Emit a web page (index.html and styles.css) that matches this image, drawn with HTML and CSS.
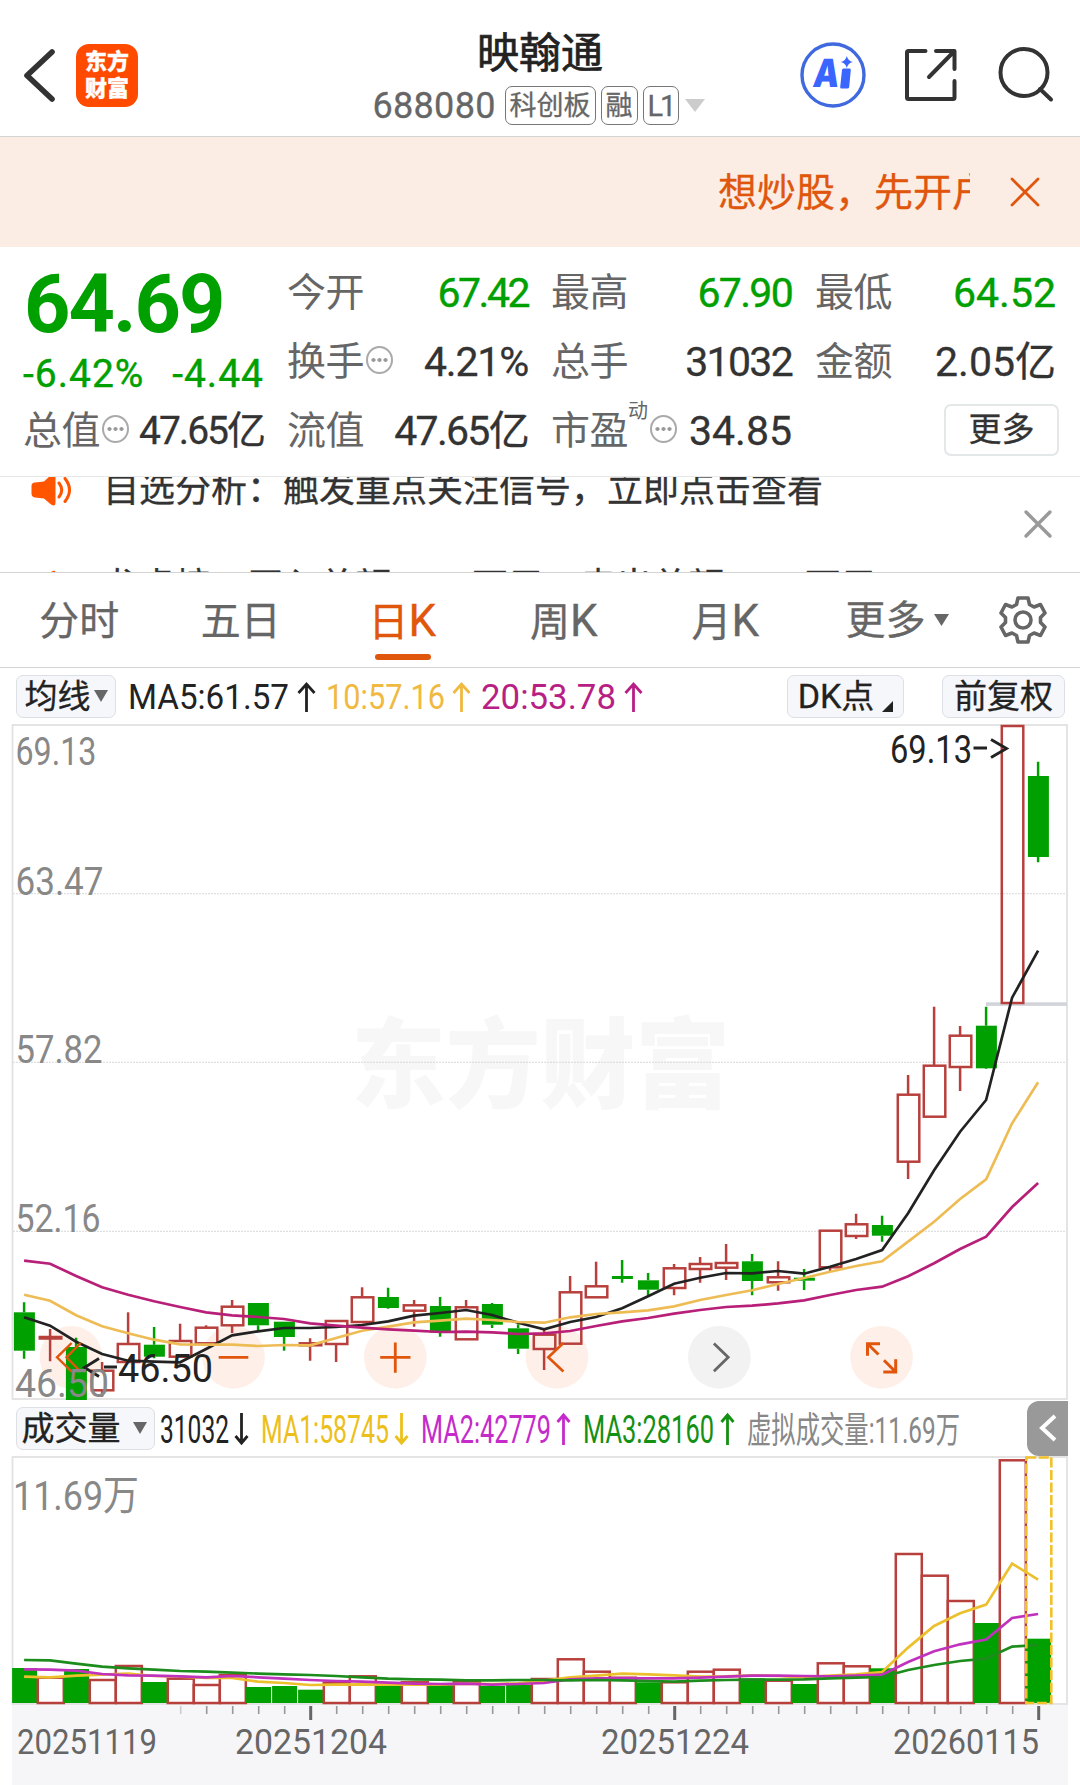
FILE: index.html
```html
<!DOCTYPE html>
<html lang="zh-CN">
<head>
    <meta charset="UTF-8">
    <title>映翰通 688080</title>
    <link rel="stylesheet" href="styles.css">
</head>
<body>
<header class="header">
    <div class="header-left">
        <svg class="back" width="32" height="54" viewBox="0 0 32 54"><path d="M29 4 L4 27.5 L29 51"/></svg>
        <div class="logo"><span>东方</span><span>财富</span></div>
    </div>
    <div class="header-title">
        <div class="stock-name">映翰通</div>
        <div class="stock-sub">
            <span class="stock-code">688080</span>
            <span class="tag">科创板</span>
            <span class="tag">融</span>
            <span class="tag tag-level">L1</span>
            <svg class="caret" width="20" height="13"><path d="M0 0H20L10 13Z" fill="#ccc"/></svg>
        </div>
    </div>
    <div class="header-right">
        <svg width="70" height="70" viewBox="0 0 70 70">
            <circle cx="35" cy="35" r="31" fill="none" stroke="#4069e0" stroke-width="3.4"/>
            <text class="ai" transform="translate(14 47) skewX(-7)" textLength="26" lengthAdjust="spacingAndGlyphs">A</text>
            <path d="M44 30q0-1.500 1.500-1.500h6q1.500 0 1.300 1.500l-1.600 17q-.2 1.500-1.700 1.500h-6q-1.500 0-1.300-1.500zM48.800 16q1.200 5 6 6q-4.800 1.200-6 6q-1.200-4.800-6-6q4.800-1 6-6z" fill="#3a66ff"/>
        </svg>
        <svg class="line-icon share" width="56" height="56" viewBox="0 0 56 56">
            <path d="M22.500 4H5.500Q4 4 4 5.500V50.500Q4 52 5.500 52H50Q51.500 52 51.500 50.500V34M33 4H51.500V22M51 4.500L26 30"/>
        </svg>
        <svg class="line-icon search" width="58" height="58" viewBox="0 0 58 58">
            <circle cx="27" cy="26.500" r="23.500"/><path d="M43 43L54 53.500"/>
        </svg>
    </div>
</header>

<div class="banner">
    <div class="marquee">想炒股，先开户</div>
    <svg class="banner-close" width="32" height="32" viewBox="0 0 32 32"><path d="M3 3L29 29M29 3L3 29"/></svg>
</div>

<section class="quote">
    <div class="price-box">
        <div class="price">64.69</div>
        <div class="change"><span>-6.42%</span><span>-4.44</span></div>
    </div>
    <div class="cell"><label>今开</label><b class="down tight">67.42</b></div>
    <div class="cell"><label>最高</label><b class="down mid">67.90</b></div>
    <div class="cell"><label>最低</label><b class="down">64.52</b></div>
    <div class="cell"><label>换手</label><i class="info"></i><b class="semi">4.21%</b></div>
    <div class="cell"><label>总手</label><b class="mid">31032</b></div>
    <div class="cell"><label>金额</label><b>2.05亿</b></div>
    <div class="cell"><label>总值</label><i class="info"></i><b class="small">47.65亿</b></div>
    <div class="cell"><label>流值</label><b class="mid">47.65亿</b></div>
    <div class="cell"><label>市盈<sup>动</sup></label><i class="info"></i><b>34.85</b></div>
    <div class="cell"><button class="more">更多</button></div>
</section>

<section class="news">
    <div class="news-list">
        <div class="news-item">
            <svg width="42" height="36" viewBox="0 0 42 36"><path d="M4 10.500Q.5 10.500.5 14V21.500Q.5 25 4 25.500L13 26.500L20 32.500Q24.500 35 24.500 31V4Q24.500 0 20 3L13 9.500Z" fill="#ff5500"/><path d="M28 11Q33.500 18 28 25M34 6.500Q43 18 34 29.500" fill="none" stroke="#ff5500" stroke-width="3" stroke-linecap="round"/></svg>
            <span>自选分析：触发重点关注信号，立即点击查看</span>
        </div>
        <div class="news-item">
            <svg width="42" height="36" viewBox="0 0 42 36"><path d="M4 10.500Q.5 10.500.5 14V21.500Q.5 25 4 25.500L13 26.500L20 32.500Q24.500 35 24.500 31V4Q24.500 0 20 3L13 9.500Z" fill="#ff5500"/><path d="M28 11Q33.500 18 28 25M34 6.500Q43 18 34 29.500" fill="none" stroke="#ff5500" stroke-width="3" stroke-linecap="round"/></svg>
            <span>龙虎榜：买入总额3444万元，卖出总额7778万元</span>
        </div>
    </div>
    <svg class="news-close" width="30" height="30" viewBox="0 0 30 30"><path d="M3 3L27 27M27 3L3 27"/></svg>
</section>

<nav class="tabs">
    <a class="tab">分时</a>
    <a class="tab">五日</a>
    <a class="tab active">日<em>K</em></a>
    <a class="tab">周<em>K</em></a>
    <a class="tab">月<em>K</em></a>
    <a class="tab tab-more">更多<svg width="15" height="12"><path d="M0 0H15L7.500 12Z" fill="#666"/></svg></a>
    <svg class="gear" width="50" height="50" viewBox="-25 -25 50 50">
        <circle r="8"/>
        <path d="M-5-22H5L6.500-15.500L11-13L17.500-15.500L22-7L17.500-2.500V2.500L22 7L17.500 15.500L11 13L6.500 15.500L5 22H-5L-6.500 15.500L-11 13L-17.500 15.500L-22 7L-17.500 2.500V-2.500L-22-7L-17.500-15.500L-11-13L-6.500-15.500Z"/>
    </svg>
</nav>

<div class="legend">
    <button class="chip chip-ma">均线<svg width="14" height="12"><path d="M0 0H14L7 12Z" fill="#666"/></svg></button>
    <svg id="maLegend" class="legend-text" width="540" height="56" viewBox="120 668 540 56"></svg>
    <button class="chip chip-dk"><em>DK</em>点<svg width="11" height="11"><path d="M11 0V11H0Z" fill="#222"/></svg></button>
    <button class="chip chip-adjust">前复权</button>
</div>

<svg id="kline" class="chart" width="1080" height="676" viewBox="0 724 1080 676"></svg>

<div class="legend legend-volume">
    <button class="chip chip-volume">成交量<svg width="14" height="12"><path d="M0 0H14L7 12Z" fill="#666"/></svg></button>
    <svg id="volumeLegend" class="legend-text" width="850" height="56" viewBox="155 1400 850 56"></svg>
    <div class="drawer"><svg width="20" height="30" viewBox="0 0 20 30"><path d="M17 3L4 15L17 27"/></svg></div>
</div>

<svg id="volume" class="chart" width="1080" height="329" viewBox="0 1456 1080 329"></svg>

<script src="chart.js"></script>
</body>
</html>
```
FILE: styles.css
```css
* {
    box-sizing: border-box;
}

body {
    margin: 0;
    width: 1080px;
    height: 1785px;
    overflow: hidden;
    background: #fff;
    color: #333;
    font-family: Roboto, "Noto Sans CJK SC", sans-serif;
    -webkit-text-stroke: 0.3px;
}

svg {
    display: block;
    flex: none;
}

em, i {
    font-style: normal;
}

button {
    font-family: inherit;
    padding: 0;
}

/* header */
.header {
    height: 137px;
    display: grid;
    grid-template-columns: 1fr auto 1fr;
    border-bottom: 1px solid #d4d4d4;
}

.header-left {
    display: flex;
    align-items: center;
    height: 150px;
    padding-left: 23px;
}

.back path {
    fill: none;
    stroke: #333;
    stroke-width: 5.6;
    stroke-linecap: round;
    stroke-linejoin: round;
}

.logo {
    width: 62px;
    height: 63px;
    margin-left: 21px;
    border-radius: 13px;
    background: #ff4a00;
    color: #fff;
    font-size: 22px;
    font-weight: 900;
    line-height: 27px;
    display: flex;
    flex-direction: column;
    align-items: center;
    justify-content: center;
}

.header-title {
    padding-top: 22px;
    display: flex;
    flex-direction: column;
    align-items: center;
}

.stock-name {
    color: #222;
    font-size: 42px;
    line-height: 63px;
    -webkit-text-stroke: 0.7px #222;
}

.stock-sub {
    display: flex;
    align-items: center;
    width: 335px;
    height: 41px;
    color: #666;
}

.stock-code {
    width: 130px;
    font-size: 36px;
    line-height: 39px;
    padding-top: 2px;
    letter-spacing: 0.3px;
}

.tag {
    height: 39px;
    padding: 0 4px;
    margin-right: 5px;
    border: 1px solid #777;
    border-radius: 7px;
    font-size: 27px;
    line-height: 38px;
    white-space: nowrap;
}

.tag:nth-child(2) {
    margin-left: 2px;
}

.tag-level {
    font-size: 29px;
    letter-spacing: -3px;
    padding-right: 5px;
    margin-right: 3px;
}

.caret {
    margin-left: 3px;
}

.header-right {
    display: flex;
    align-items: center;
    justify-content: flex-end;
    height: 150px;
    padding-right: 25px;
}

.ai {
    font: 900 39px Inter, sans-serif;
    fill: #3a66ff;
}

.line-icon {
    fill: none;
    stroke: #333;
    stroke-width: 4;
    stroke-linecap: round;
    stroke-linejoin: round;
}

.share {
    margin-left: 35px;
}

.search {
    margin-left: 38px;
}

/* banner */
.banner {
    height: 110px;
    background: #fbede4;
    display: flex;
    align-items: center;
    justify-content: flex-end;
    padding-right: 39px;
}

.marquee {
    width: 252px;
    padding-top: 2px;
    overflow: hidden;
    white-space: nowrap;
    color: #e0560d;
    font-size: 39px;
    line-height: 60px;
}

.banner-close {
    margin-left: 39px;
    fill: none;
    stroke: #e0560d;
    stroke-width: 2.8;
    stroke-linecap: round;
}

/* quote */
.quote {
    height: 229px;
    padding: 11px 24px 0;
    display: grid;
    grid-template-columns: repeat(4, 240px);
    grid-template-rows: repeat(3, 69px);
    column-gap: 24px;
}

.price-box {
    grid-row: span 2;
    color: #00a000;
}

.price {
    font-size: 81px;
    font-weight: 700;
    line-height: 93px;
    letter-spacing: -2px;
    -webkit-text-stroke: 0;
}

.change {
    display: flex;
    justify-content: space-between;
    margin-left: -1px;
    font-size: 39px;
    line-height: 46px;
    letter-spacing: 1px;
    -webkit-text-stroke: 0.4px #00a000;
}

.cell {
    display: flex;
    align-items: center;
    white-space: nowrap;
}

.cell label {
    margin-left: -1px;
    font-size: 39px;
    line-height: 60px;
    letter-spacing: -0.5px;
    color: #666;
    -webkit-text-stroke: 0;
}

.cell sup {
    display: inline-block;
    height: 52px;
    font-size: 20px;
    line-height: 20px;
    vertical-align: top;
}

.cell b {
    margin-left: auto;
    font-size: 41px;
    font-weight: 400;
    line-height: 60px;
}

.cell b.down {
    color: #00a000;
    -webkit-text-stroke: 0.4px #00a000;
}

.cell b.tight {
    letter-spacing: -2.5px;
}

.cell b.mid {
    letter-spacing: -1.7px;
}

.cell b.semi {
    letter-spacing: -1.2px;
}

.cell b.small {
    font-size: 39px;
    letter-spacing: -2px;
}

.info {
    width: 27px;
    height: 28px;
    border: 2px solid #aaa;
    border-radius: 50%;
    background: radial-gradient(circle, #999 1.7px, transparent 2.2px) center / 6px 8px repeat-x;
    background-clip: content-box;
    padding: 0 2px;
    margin: -3px 0 0 2px;
}

.more {
    width: 115px;
    height: 52px;
    margin: -1px -3px 0 auto;
    border: 2px solid #e4e7e8;
    border-radius: 7px;
    background: #fff;
    color: #333;
    font-size: 33px;
    line-height: 48px;
}

/* news ticker */
.news {
    height: 97px;
    border-top: 1px solid #e8e8e8;
    border-bottom: 1px solid #d4d4d4;
    display: flex;
    justify-content: space-between;
    padding: 0 27px 0 31px;
}

.news-list {
    height: 95px;
    overflow: hidden;
}

.news-item {
    display: flex;
    align-items: center;
    height: 97px;
    font-size: 36px;
    white-space: nowrap;
}

.news-item:first-child {
    margin-top: -36px;
}

.news-item span {
    margin-left: 30px;
    line-height: 44px;
}

.news-close {
    margin-top: 32px;
    fill: none;
    stroke: #999;
    stroke-width: 3.4;
    stroke-linecap: round;
}

/* period tabs */
.tabs {
    height: 95px;
    display: flex;
    align-items: center;
    border-bottom: 1px solid #d4d4d4;
    color: #666;
    font-size: 40px;
}

.tab {
    width: 161.500px;
    height: 94px;
    line-height: 97px;
    padding-right: 3px;
    text-align: center;
}

.tab em {
    font-size: 44px;
}

.tab.active {
    position: relative;
    color: #e0560d;
}

.tab.active::after {
    content: "";
    position: absolute;
    left: 52px;
    bottom: 7px;
    width: 56px;
    height: 6px;
    border-radius: 3px;
    background: #e0560d;
}

.tab-more {
    width: 160px;
    display: flex;
    align-items: center;
    justify-content: center;
    gap: 8px;
    padding: 0 3px 0 22px;
}

.gear {
    margin-left: 30px;
    fill: none;
    stroke: #666;
    stroke-width: 3.6;
    stroke-linejoin: round;
}

/* legends above the charts */
.legend {
    height: 56px;
    display: flex;
    align-items: center;
    padding: 0 15px;
}

.chip {
    height: 43px;
    display: flex;
    align-items: center;
    justify-content: center;
    border: 1.5px solid #dcdfe3;
    border-radius: 7px;
    background: #f6f7fa;
    color: #222;
    font-size: 33px;
    line-height: 43px;
    white-space: nowrap;
}

.chip em {
    font-size: 34px;
}

.chip-ma {
    width: 100px;
    margin-left: 1px;
    gap: 3px;
}

.legend-text {
    margin-left: 4px;
}

.chip-dk {
    width: 117px;
    margin-left: 127px;
}

.chip-dk svg {
    margin: 20px 0 0 8px;
}

.chip-adjust {
    width: 123px;
    margin-left: auto;
}

.legend-volume {
    padding: 0 12px 0 16px;
}

.chip-volume {
    width: 139px;
    gap: 12px;
    padding-right: 3px;
}

.legend-volume .legend-text {
    margin-left: 0;
}

.drawer {
    width: 41px;
    height: 55px;
    margin-left: auto;
    border-radius: 12px 0 0 12px;
    background: #999;
    display: flex;
    align-items: center;
    justify-content: center;
}

.drawer path {
    fill: none;
    stroke: #fff;
    stroke-width: 4;
}

.chart {
    overflow: hidden;
}
```
FILE: chart.js
```js
const RED = '#b8403c';
const GREEN = '#00a000';
const BLACK = '#222';
const ORANGE = '#e0560d';
const STEP = 26;
const FIRST = 24.1;

// [rising, high, body top, body bottom, low]
const candles = [
    [0, 1302.3, 1312.3, 1350.7, 1358.7], [1, 1329, 1337, 1338.5, 1361.3], [0, 1337.7, 1347, 1400, 1400],
    [1, 1362, 1370.7, 1390.3, 1396.7], [1, 1312.3, 1344, 1362, 1362], [0, 1327, 1344.7, 1356.7, 1358.3],
    [1, 1323.7, 1341, 1356.7, 1356.7], [1, 1325.3, 1327.7, 1343.3, 1343.3], [1, 1300, 1306.7, 1325.3, 1333],
    [0, 1303, 1303, 1325.3, 1330.7], [0, 1321.7, 1321.7, 1337, 1350.7], [1, 1338.3, 1343.3, 1345.3, 1360.7],
    [1, 1321, 1321, 1344, 1362], [1, 1287.3, 1297.3, 1322, 1322], [0, 1287.7, 1297, 1308, 1308.7],
    [1, 1300, 1305.3, 1310.7, 1326.7], [0, 1297, 1306, 1332.7, 1336.7], [1, 1300, 1307.3, 1339.3, 1340],
    [0, 1303, 1304, 1324.7, 1328], [0, 1324.3, 1328.3, 1348.7, 1354], [1, 1330, 1334.7, 1349, 1370],
    [1, 1276, 1292.3, 1343.7, 1343.7], [1, 1261.7, 1286.3, 1297.3, 1297.3], [0, 1260, 1276, 1279, 1282.7],
    [0, 1273, 1280.3, 1289.7, 1295.7], [1, 1264, 1268.3, 1288, 1295.3], [1, 1257, 1264, 1269, 1282.7],
    [1, 1244, 1263, 1267.7, 1280], [0, 1254, 1261.3, 1281, 1295.3], [1, 1261.3, 1277.3, 1282.3, 1290.7],
    [0, 1269, 1277.7, 1280.7, 1290], [1, 1230.7, 1230.7, 1267.3, 1271.3], [1, 1213.7, 1224.3, 1236, 1239],
    [0, 1215.7, 1225, 1235.7, 1241.7], [1, 1075, 1094.7, 1161.7, 1179], [1, 1006.7, 1065.7, 1116.7, 1116.7],
    [1, 1026, 1035.7, 1067, 1091], [0, 1006.7, 1025.7, 1068.3, 1069], [1, 726, 726, 1003, 1003],
    [0, 761.7, 776, 857, 862.3]
];

const ma5 = [1317.3, 1325.7, 1341.7, 1354, 1360.7, 1361.7, 1362.3, 1349, 1335.3, 1331.3, 1328, 1328, 1327, 1325,
    1321.3, 1315.7, 1313, 1310, 1315, 1322.7, 1329.3, 1322, 1317, 1308.3, 1296.3, 1283.7, 1277.7, 1273, 1273.3, 1271,
    1273.7, 1266.7, 1259, 1250, 1213.3, 1170.3, 1131.7, 1100, 997.7, 950.7];
const ma10 = [1294.7, 1300.7, 1315.3, 1326.3, 1333.3, 1339.7, 1344.3, 1344.7, 1344.7, 1346, 1345, 1345.3, 1338,
    1330.7, 1326.7, 1322.3, 1320.7, 1318.7, 1320, 1322, 1322.7, 1317.3, 1314, 1312.3, 1310.3, 1306.3, 1300, 1295,
    1290.3, 1284, 1278, 1271.7, 1266, 1261.3, 1241.7, 1221.7, 1199, 1179.3, 1123.3, 1082.3];
const ma20 = [1260.7, 1263.7, 1276, 1287.3, 1294.7, 1301.3, 1307, 1312.3, 1315.3, 1317, 1319, 1323.3, 1325.7,
    1327.7, 1329.3, 1330.7, 1332, 1331.7, 1332.3, 1334, 1333.3, 1331, 1326, 1321.3, 1318, 1313.7, 1310, 1307, 1305.7,
    1303.3, 1300.3, 1295, 1290, 1286.7, 1276.3, 1263.3, 1249, 1236.7, 1207, 1183];

// heights above the volume base line
const volumes = [35, 25.3, 34, 23, 37, 21, 24.3, 18, 28, 16, 17, 13.3, 20.3, 26.7, 18, 20.7, 18.7, 21, 17, 18, 24,
    43.7, 31.3, 25.3, 20.7, 20.7, 31.3, 33.3, 24.7, 22.3, 19, 39.7, 36.7, 34.7, 149, 127.3, 102, 80, 242.7, 64.3];
const volumeUp = [1, 3, 4, 6, 7, 8, 12, 13, 15, 17, 20, 21, 22, 23, 25, 26, 27, 29, 31, 32, 34, 35, 36, 38];
const vol1 = [26.7, 26, 27.7, 28.7, 29.7, 27.3, 26.7, 25.3, 25.3, 21.7, 20.3, 18.3, 18.7, 19, 18.7, 19, 18.7, 19.7,
    19.3, 20, 22.7, 26, 27.7, 29.7, 29, 28, 26.7, 27, 28, 27.3, 26, 27.7, 29, 31.3, 55.7, 77.3, 90, 98.7, 139.7, 123.7];
const vol2 = [34, 33.7, 32.7, 29.3, 28, 27.7, 27, 26, 27.3, 26, 24.7, 23.3, 22.3, 21.7, 20.7, 19.7, 19.3, 19.7,
    18.7, 19.3, 20.3, 24, 25, 25, 25, 25, 25.7, 26.7, 27.7, 27.7, 27.3, 27, 27.7, 28.7, 41.3, 52, 59, 63.7, 85.3, 89.3];
const vol3 = [43.3, 43, 39.7, 36.7, 35, 33.7, 32.3, 31.7, 30.7, 29.7, 29, 28.3, 27.3, 26, 24.7, 24, 23.7, 23, 23,
    23.3, 23.3, 23, 23.3, 23, 22.3, 21.7, 22.7, 23.3, 23.7, 23.7, 24, 25, 25.7, 26.3, 33.3, 38.3, 42.3, 44.7, 56.7, 58.3];

const px = i => FIRST + STEP * i;

function add(svg, name, attrs, text) {
    const el = document.createElementNS('http://www.w3.org/2000/svg', name);
    for (const key in attrs) {
        el.setAttribute(key, attrs[key]);
    }
    if (text) {
        el.textContent = text;
    }
    svg.appendChild(el);
}

function rect(svg, x, y, width, height, fill) {
    add(svg, 'rect', {x, y, width, height, fill});
}

function path(svg, d, stroke, width = 2.7) {
    add(svg, 'path', {d, stroke, 'stroke-width': width, fill: 'none'});
}

function label(svg, str, x, y, width, size, fill) {
    add(svg, 'text', {x, y, fill, 'font-size': size, textLength: width, lengthAdjust: 'spacingAndGlyphs'}, str);
}

function line(svg, ys, color) {
    path(svg, 'M' + ys.map((y, i) => px(i) + ' ' + y).join('L'), color);
}

function arrow(svg, x, top, bottom, half, color, up) {
    const tip = up ? top : bottom;
    const back = up ? tip + half + 1 : tip - half - 1;
    path(svg, `M${x} ${top}V${bottom}M${x - half} ${back}L${x} ${tip}L${x + half} ${back}`, color, 2.8);
}

function drawKline() {
    const svg = document.getElementById('kline');
    label(svg, '东方财富', 351, 1100, 379, 98, '#f7f7f7');
    svg.lastChild.setAttribute('font-weight', 900);
    [893.7, 1062.3, 1231.3].forEach(y => {
        add(svg, 'path', {d: `M13 ${y}H1067`, stroke: '#d8d8d8', 'stroke-width': 1, 'stroke-dasharray': '2 1'});
    });
    add(svg, 'rect', {x: 12.5, y: 725, width: 1054.5, height: 674, fill: 'none', stroke: '#e2e2e2', 'stroke-width': 1.8});
    [71, 233.5, 395.3, 557, 719.4, 881.6].forEach((cx, i) => {
        add(svg, 'circle', {cx, cy: 1357.3, r: 31.4, fill: i === 4 ? '#f2f2f2' : '#fef0e9'});
    });
    rect(svg, 986, 1002.3, 81, 3.6, '#d3d4da');

    candles.forEach(([rising, high, top, bottom, low], i) => {
        const x = px(i);
        const color = rising ? RED : GREEN;
        path(svg, `M${x} ${high}V${top}M${x} ${bottom}V${low}`, color, 2.5);
        if (rising) {
            add(svg, 'rect', {x: x - 10.3, y: top, width: 21.5, height: bottom - top, fill: 'none', stroke: color, 'stroke-width': 2.5});
        } else {
            rect(svg, x - 10.2, top, 21, bottom - top, color);
        }
    });
    line(svg, ma5, BLACK);
    line(svg, ma10, '#eebc55');
    line(svg, ma20, '#b81f78');

    path(svg, 'M71.6 1343L57 1357.3L71.6 1371.7M80.6 1343L66.5 1357.3L80.6 1371.7', ORANGE, 2.4);
    path(svg, 'M218.7 1357.3H248.3M380.2 1357.3H410.5M395.3 1342.5V1372.7', ORANGE, 2.8);
    path(svg, 'M563.4 1343L548.3 1357.3L563.4 1371.5', ORANGE);
    path(svg, 'M713.9 1343.5L728.2 1357.3L713.9 1371.3', '#666', 2.8);
    path(svg, 'M880 1343.7H867.5V1355.7M867.5 1343.7L878.5 1354.500M883.3 1372H895.700V1359.300M895.700 1372L884 1360.300', ORANGE, 3);

    label(svg, '69.13', 15.5, 764.500, 81, 38, '#888');
    label(svg, '63.47', 15.5, 894.500, 88, 38, '#888');
    label(svg, '57.82', 15.5, 1063, 87, 38, '#888');
    label(svg, '52.16', 15.5, 1231.500, 85, 38, '#888');
    label(svg, '69.13', 890, 762.500, 82, 39, BLACK);
    path(svg, 'M973.500 748H987M991 739.500L1006.500 748.500L991 757.500', BLACK, 2.9);
    path(svg, 'M99 1358.500L84.500 1367.500L99 1376.500M104 1367H117', BLACK, 2.9);
    label(svg, '46.50', 118, 1381.500, 95, 39, BLACK);
    label(svg, '46.50', 15, 1396.500, 94, 38, '#888');
}

function drawVolume() {
    const svg = document.getElementById('volume');
    const base = 1703;
    rect(svg, 12, 1705, 1056, 80, '#f6f6f9');
    add(svg, 'rect', {x: 12.5, y: 1457, width: 1054.5, height: 247, fill: 'none', stroke: '#e2e2e2', 'stroke-width': 1.8});
    volumes.forEach((h, i) => {
        const x = px(i);
        if (volumeUp.includes(i)) {
            add(svg, 'rect', {x: x - 12.3, y: base - h, width: 26, height: h, fill: '#fff', stroke: RED, 'stroke-width': 2.5});
        } else {
            rect(svg, x - 12, base - h, 25, h, GREEN);
        }
    });
    const toY = h => base + 0.3 - h;
    line(svg, vol1.map(toY), '#ecc02c');
    line(svg, vol2.map(toY), '#c032bd');
    line(svg, vol3.map(toY), '#1c8c1c');
    add(svg, 'rect', {x: 1026.3, y: 1457.500, width: 25, height: 245.500, fill: 'none', stroke: '#f2c12a', 'stroke-width': 2.6, 'stroke-dasharray': '10 2.5'});
    label(svg, '11.69万', 13, 1509.500, 126, 41, '#888');

    for (let i = 6; i < 40; i++) {
        const major = i === 11 || i === 25 || i === 39;
        path(svg, `M${px(i) + 0.6} 1706V${major ? 1720 : 1714}`, major ? '#666' : i === 6 ? '#ccc' : '#999', major ? 3 : 1.6);
    }
    label(svg, '20251119', 17, 1754, 140, 35, '#666');
    label(svg, '20251204', 235, 1754, 152, 35, '#666');
    label(svg, '20251224', 601, 1754, 148, 35, '#666');
    label(svg, '20260115', 893, 1754, 146, 35, '#666');
}

function drawLegends() {
    const ma = document.getElementById('maLegend');
    label(ma, 'MA5:61.57', 128, 709, 161, 35, BLACK);
    arrow(ma, 306.500, 684, 712, 8, BLACK, true);
    label(ma, '10:57.16', 326, 709, 119, 35, '#f0b93f');
    arrow(ma, 461.500, 684, 712, 8, '#f0b93f', true);
    label(ma, '20:53.78', 481, 709, 135, 35, '#b81f84');
    arrow(ma, 633.500, 684, 712, 8, '#b81f84', true);

    const vol = document.getElementById('volumeLegend');
    label(vol, '31032', 160, 1442.5, 69, 38, BLACK);
    arrow(vol, 241.500, 1413, 1443, 6, BLACK, false);
    label(vol, 'MA1:58745', 261, 1442.5, 128, 38, '#ecc01c');
    arrow(vol, 401.500, 1413, 1443, 6, '#ecc01c', false);
    label(vol, 'MA2:42779', 421, 1442.5, 130, 38, '#c52acb');
    arrow(vol, 563.500, 1415, 1445, 6, '#c52acb', true);
    label(vol, 'MA3:28160', 583, 1442.5, 131, 38, '#149014');
    arrow(vol, 727.500, 1415, 1445, 6, '#149014', true);
    label(vol, '虚拟成交量:11.69万', 747, 1442.5, 213, 36, '#888');
}

drawKline();
drawVolume();
drawLegends();
```
